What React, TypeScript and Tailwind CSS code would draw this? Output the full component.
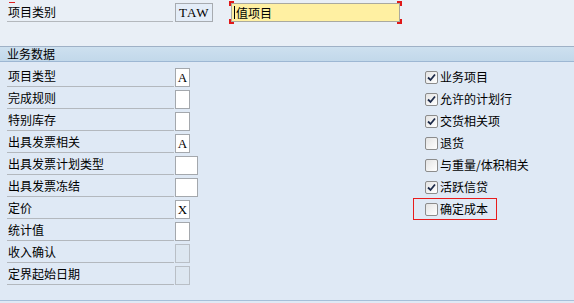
import React, { type FC } from "react";

interface FieldRow {
  label: string;
  value?: string;
  wide?: boolean;
  disabled?: boolean;
}

interface CheckRow {
  label: string;
  checked: boolean;
  highlight?: boolean;
}

const fields: FieldRow[] = [
  { label: "项目类型", value: "A" },
  { label: "完成规则" },
  { label: "特别库存" },
  { label: "出具发票相关", value: "A" },
  { label: "出具发票计划类型", wide: true },
  { label: "出具发票冻结", wide: true },
  { label: "定价", value: "X" },
  { label: "统计值" },
  { label: "收入确认", disabled: true },
  { label: "定界起始日期", disabled: true },
];

const checks: CheckRow[] = [
  { label: "业务项目", checked: true },
  { label: "允许的计划行", checked: true },
  { label: "交货相关项", checked: true },
  { label: "退货", checked: false },
  { label: "与重量/体积相关", checked: false },
  { label: "活跃信贷", checked: true },
  { label: "确定成本", checked: false, highlight: true },
];

const font = { fontFamily: '"Noto Sans CJK SC", "Liberation Sans", sans-serif' };
const mono = { fontFamily: '"Liberation Serif", serif' };

const CheckBox: FC<{ checked: boolean }> = ({ checked }) => (
  <div className="w-[13px] h-[13px] rounded-[2px] border border-[#8c8c8c] bg-gradient-to-br from-[#e4e4e4] to-white flex items-center justify-center">
    {checked && (
      <svg width="9" height="9" viewBox="0 0 9 9">
        <path d="M1 4.5 L3.5 7 L8 1.5" fill="none" stroke="#1c2a4a" strokeWidth="1.8" />
      </svg>
    )}
  </div>
);

const App: FC = () => {
  return (
    <div className="w-[574px] h-[303px] bg-[#dfe9f5] text-black text-[12px] leading-none overflow-hidden" style={font}>
      {/* Header */}
      <div className="h-[47px] bg-[#e9eff6] border-b border-[#9fb1c6] pt-[3px] flex items-start">
        <div className="relative ml-[7px] w-[166px] h-[19px] border-b border-[#b4b8bd] flex items-center pl-[1px]">
          <span className="absolute left-[2px] top-[-1px] w-[6px] h-[1px] bg-[#e02020]" />
          项目类别
        </div>
        <div className="ml-[2px] w-[38px] h-[19px] border border-[#a7abb0] bg-[#e4edf8] flex items-center pl-[3px] text-[13px] tracking-[1px]" style={mono}>
          TAW
        </div>
        <div className="relative ml-[16px] mt-[-2px] w-[173px] h-[23px] p-[2px]">
          <span className="absolute left-0 top-0 w-[5px] h-[5px] border-l-2 border-t-2 border-[#e01818]" />
          <span className="absolute right-0 top-0 w-[5px] h-[5px] border-r-2 border-t-2 border-[#e01818]" />
          <span className="absolute left-0 bottom-0 w-[5px] h-[5px] border-l-2 border-b-2 border-[#e01818]" />
          <span className="absolute right-0 bottom-0 w-[5px] h-[5px] border-r-2 border-b-2 border-[#e01818]" />
          <div className="w-full h-full bg-[#fff0a2] border border-[#a9a9a0] flex items-center pl-[2px]">
            <span className="w-[1px] h-[13px] bg-black mr-[1px]" />
            值项目
          </div>
        </div>
      </div>

      {/* Section title bar */}
      <div className="h-[15px] bg-gradient-to-b from-[#cde0ef] to-[#c2d8ea] border-b border-[#9db7d3] flex items-center pl-[7px]">
        业务数据
      </div>

      {/* Body */}
      <div className="flex pt-[4px] h-[239px] border-b border-[#a6bfd9]">
        <div className="w-[198px] flex flex-col">
          {fields.map((f) => (
            <div key={f.label} className="h-[22px] flex items-start">
              <div className="ml-[7px] w-[167px] h-[21px] border-b border-[#b3b8be] flex items-center pl-[1px]">
                {f.label}
              </div>
              <div
                className={`ml-[1px] mt-[2px] h-[19px] border flex items-center justify-center text-[13px] ${
                  f.wide ? "w-[23px]" : "w-[15px]"
                } ${
                  f.disabled
                    ? "bg-[#dde7f1] border-[#b9bfc6]"
                    : "bg-white border-[#a4a8ad]"
                }`}
                style={mono}
              >
                {f.value}
              </div>
            </div>
          ))}
        </div>

        <div className="ml-[215px] flex flex-col">
          {checks.map((c) => (
            <div key={c.label} className="h-[22px] flex items-center">
              <div
                className={`flex items-center gap-[2px] h-[22px] pl-[11px] pr-[1px] border ${
                  c.highlight ? "border-[#e81c1c] w-[84px]" : "border-transparent"
                }`}
              >
                <CheckBox checked={c.checked} />
                <span>{c.label}</span>
              </div>
            </div>
          ))}
        </div>
      </div>
    </div>
  );
};

export default App;
